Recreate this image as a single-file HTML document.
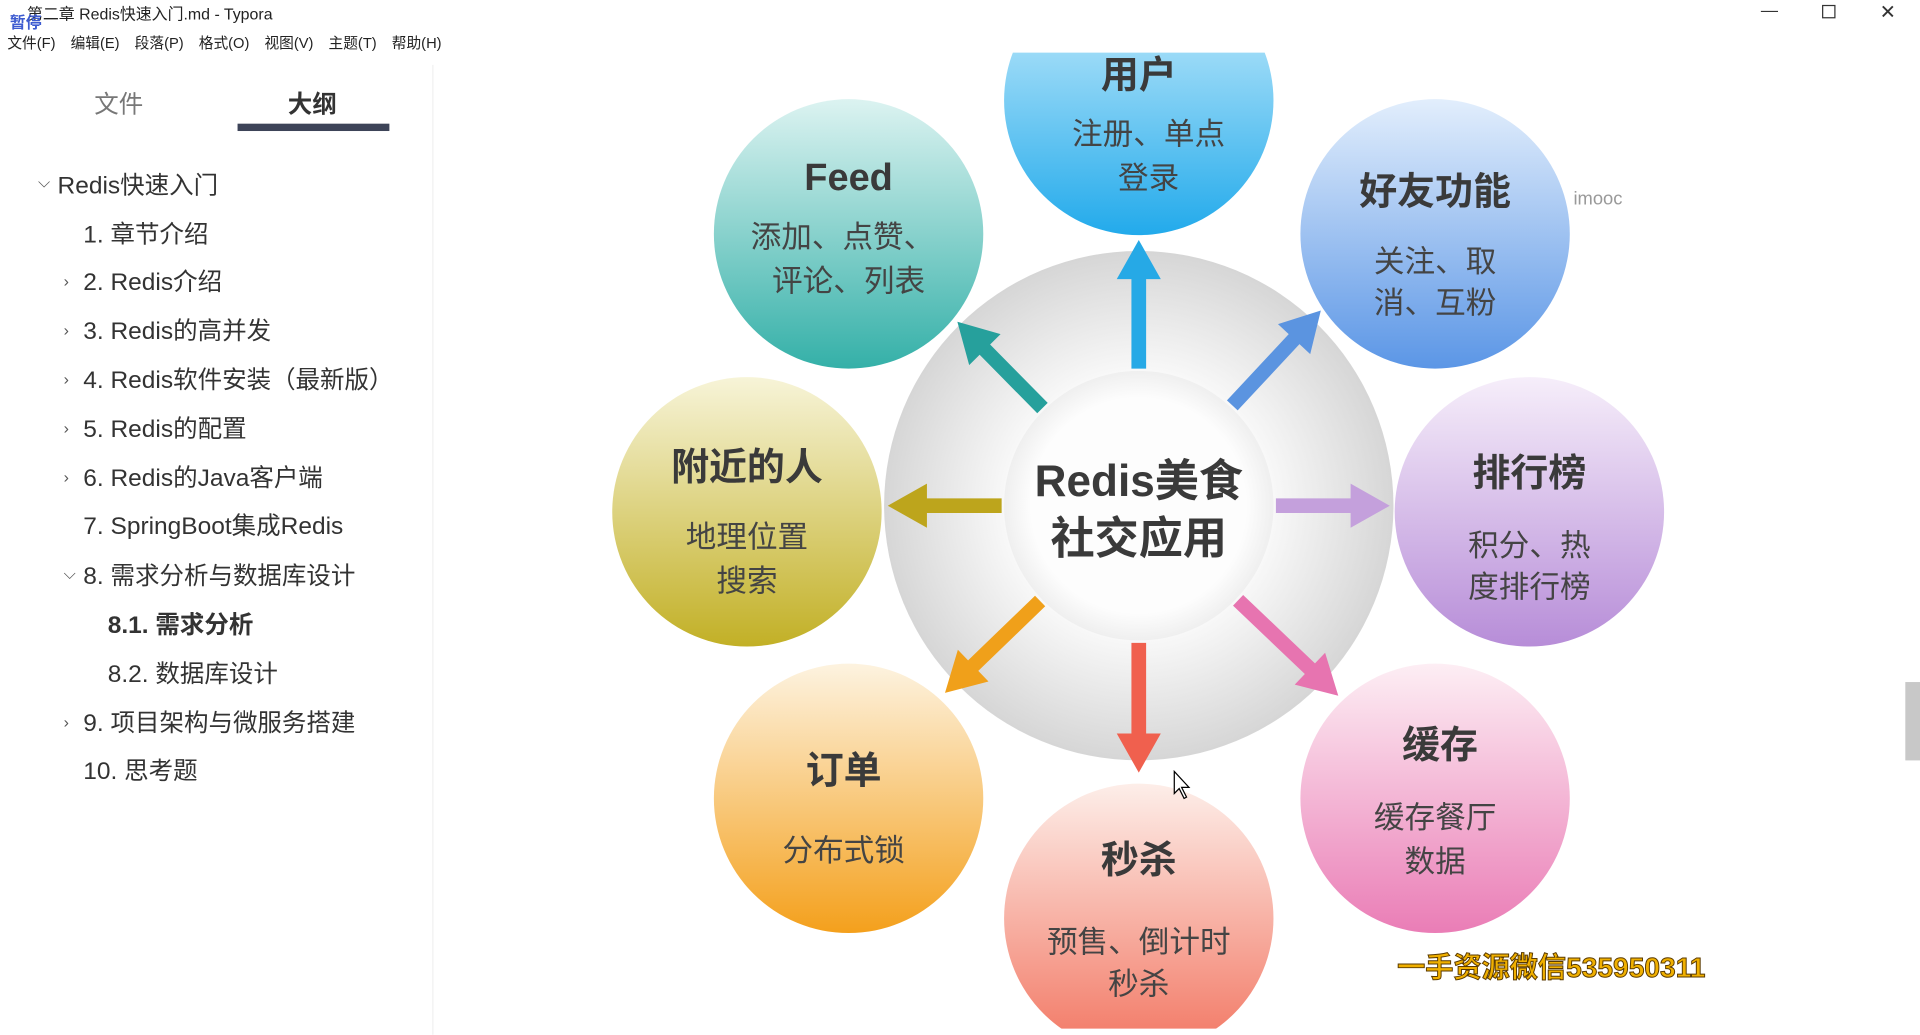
<!DOCTYPE html>
<html><head><meta charset="utf-8"><style>
html,body{margin:0;padding:0;background:#fff;width:1920px;height:1035px;overflow:hidden}
#w{position:absolute;left:0;top:0;width:1568px;height:845px;transform:scale(1.22449);transform-origin:0 0;font-family:"Liberation Sans","Noto Sans CJK SC",sans-serif;color:#333}
.a{position:absolute;white-space:nowrap}
.o{position:absolute;font-size:20px;color:#333;line-height:24px;white-space:nowrap}
.c{position:absolute;font-size:13px;color:#555}
</style></head><body><div id="w">
<div class="a" style="left:22px;top:1px;font-size:13px;color:#222">第二章 Redis快速入门.md - Typora</div>
<div class="a" style="left:8px;top:8px;font-size:13px;font-weight:bold;color:#3d5bd0">暂停</div>
<div class="a" style="left:6px;top:26px;font-size:12px;color:#222;word-spacing:9px">文件(F) 编辑(E) 段落(P) 格式(O) 视图(V) 主题(T) 帮助(H)</div>
<div class="a" style="left:1438px;top:0;font-size:14px;color:#333">—</div>
<div class="a" style="left:1488px;top:1px;width:9px;height:9px;border:1px solid #333;top:4px"></div>
<div class="a" style="left:1535px;top:0;font-size:16px;color:#333">✕</div>
<div style="position:absolute;left:353px;top:53px;width:1px;height:792px;background:#f0f0f0"></div>
<div class="a" style="left:77px;top:69px;font-size:20px;color:#777">文件</div>
<div class="a" style="left:235px;top:69px;font-size:20px;font-weight:bold;color:#333">大纲</div>
<div style="position:absolute;left:194px;top:101px;width:124px;height:6px;background:#3d4458"></div>
<div class="c" style="left:31px;top:141px">⌵</div>
<div class="o" style="left:47px;top:140px">Redis快速入门</div>
<div class="o" style="left:68px;top:180px">1. 章节介绍</div>
<div class="c" style="left:52px;top:222px">›</div><div class="o" style="left:68px;top:219px">2. Redis介绍</div>
<div class="c" style="left:52px;top:262px">›</div><div class="o" style="left:68px;top:259px">3. Redis的高并发</div>
<div class="c" style="left:52px;top:302px">›</div><div class="o" style="left:68px;top:299px">4. Redis软件安装（最新版）</div>
<div class="c" style="left:52px;top:342px">›</div><div class="o" style="left:68px;top:339px">5. Redis的配置</div>
<div class="c" style="left:52px;top:382px">›</div><div class="o" style="left:68px;top:379px">6. Redis的Java客户端</div>
<div class="o" style="left:68px;top:418px">7. SpringBoot集成Redis</div>
<div class="c" style="left:52px;top:461px">⌵</div><div class="o" style="left:68px;top:459px">8. 需求分析与数据库设计</div>
<div class="o" style="left:88px;top:499px;font-weight:bold">8.1. 需求分析</div>
<div class="o" style="left:88px;top:539px">8.2. 数据库设计</div>
<div class="c" style="left:52px;top:582px">›</div><div class="o" style="left:68px;top:579px">9. 项目架构与微服务搭建</div>
<div class="o" style="left:68px;top:618px">10. 思考题</div>
<div style="position:absolute;left:1556px;top:557px;width:12px;height:64px;background:#c8c8c8"></div>
<svg style="position:absolute;left:0;top:0" width="1568" height="845" font-family="Liberation Sans,Noto Sans CJK SC,sans-serif">
<defs>
<radialGradient id="gc" cx="0.5" cy="0.5" r="0.5"><stop offset="0.5" stop-color="#fafafa"/><stop offset="1" stop-color="#d6d6d6"/></radialGradient>
<radialGradient id="gi" cx="0.5" cy="0.5" r="0.5"><stop offset="0.8" stop-color="#fdfdfd"/><stop offset="1" stop-color="#efefef"/></radialGradient>
<linearGradient id="b1" x1="0" y1="0" x2="0" y2="1"><stop offset="0" stop-color="#d4f1fd"/><stop offset="1" stop-color="#22aaeb"/></linearGradient>
<linearGradient id="b2" x1="0" y1="0" x2="0" y2="1"><stop offset="0" stop-color="#dcf3f1"/><stop offset="1" stop-color="#34b0a8"/></linearGradient>
<linearGradient id="b3" x1="0" y1="0" x2="0" y2="1"><stop offset="0" stop-color="#e2eefc"/><stop offset="1" stop-color="#5b96e6"/></linearGradient>
<linearGradient id="b4" x1="0" y1="0" x2="0" y2="1"><stop offset="0" stop-color="#f7f4d8"/><stop offset="1" stop-color="#c2b026"/></linearGradient>
<linearGradient id="b5" x1="0" y1="0" x2="0" y2="1"><stop offset="0" stop-color="#f6eefa"/><stop offset="1" stop-color="#b78dd8"/></linearGradient>
<linearGradient id="b6" x1="0" y1="0" x2="0" y2="1"><stop offset="0" stop-color="#fdf3e0"/><stop offset="1" stop-color="#f4a01c"/></linearGradient>
<linearGradient id="b7" x1="0" y1="0" x2="0" y2="1"><stop offset="0" stop-color="#fdeef4"/><stop offset="1" stop-color="#ea7db6"/></linearGradient>
<linearGradient id="b8" x1="0" y1="0" x2="0" y2="1"><stop offset="0" stop-color="#fdeee9"/><stop offset="1" stop-color="#f27662"/></linearGradient>
<clipPath id="cl"><rect x="400" y="43" width="1100" height="797"/></clipPath>
</defs>
<g clip-path="url(#cl)">
<circle cx="930" cy="413" r="208" fill="url(#gc)"/>
<circle cx="930" cy="413" r="110" fill="url(#gi)"/>
<g transform="translate(930 413)">
<g transform="rotate(-90)"><polygon points="112,-6 185,-6 185,-18 217,0 185,18 185,6 112,6" fill="#26a9e6"/></g>
<g transform="rotate(-47)"><polygon points="112,-6 186,-6 186,-18 218,0 186,18 186,6 112,6" fill="#5b94e0"/></g>
<g transform="rotate(0)"><polygon points="112,-6 173,-6 173,-18 205,0 173,18 173,6 112,6" fill="#c4a0dc"/></g>
<g transform="rotate(43.6)"><polygon points="112,-6 193,-6 193,-18 225,0 193,18 193,6 112,6" fill="#e774b0"/></g>
<g transform="rotate(90)"><polygon points="112,-6 186,-6 186,-18 218,0 186,18 186,6 112,6" fill="#f0604e"/></g>
<g transform="rotate(136)"><polygon points="112,-6 188,-6 188,-18 220,0 188,18 188,6 112,6" fill="#f0a01a"/></g>
<g transform="rotate(180)"><polygon points="112,-6 173,-6 173,-18 205,0 173,18 173,6 112,6" fill="#bda51c"/></g>
<g transform="rotate(-134.6)"><polygon points="112,-6 179,-6 179,-18 211,0 179,18 179,6 112,6" fill="#26a09c"/></g>
</g>
<circle cx="930" cy="82" r="110" fill="url(#b1)"/>
<circle cx="693" cy="191" r="110" fill="url(#b2)"/>
<circle cx="1172" cy="191" r="110" fill="url(#b3)"/>
<circle cx="610" cy="418" r="110" fill="url(#b4)"/>
<circle cx="1249" cy="418" r="110" fill="url(#b5)"/>
<circle cx="693" cy="652" r="110" fill="url(#b6)"/>
<circle cx="1172" cy="652" r="110" fill="url(#b7)"/>
<circle cx="930" cy="750" r="110" fill="url(#b8)"/>
<g text-anchor="middle" fill="#3a3a3a">
<text x="930" y="405" font-size="36" font-weight="bold">Redis美食</text>
<text x="930" y="452" font-size="36" font-weight="bold">社交应用</text>
<g font-size="31" font-weight="bold">
<text x="930" y="72">用户</text><text x="693" y="155">Feed</text><text x="1172" y="167">好友功能</text>
<text x="610" y="392">附近的人</text><text x="1249" y="397">排行榜</text><text x="689" y="640">订单</text>
<text x="1176" y="619">缓存</text><text x="930" y="713">秒杀</text></g>
<g font-size="25" fill="#444">
<text x="938" y="118">注册、单点</text><text x="938" y="154">登录</text>
<text x="688" y="202">添加、点赞、</text><text x="693" y="238">评论、列表</text>
<text x="1172" y="222">关注、取</text><text x="1172" y="256">消、互粉</text>
<text x="610" y="447">地理位置</text><text x="610" y="483">搜索</text>
<text x="1249" y="454">积分、热</text><text x="1249" y="488">度排行榜</text>
<text x="689" y="703">分布式锁</text>
<text x="1172" y="676">缓存餐厅</text><text x="1172" y="712">数据</text>
<text x="930" y="778">预售、倒计时</text><text x="930" y="812">秒杀</text></g>
</g>
</g>
<text x="1285" y="167" font-size="15" fill="#999">imooc</text>
<text x="1141" y="798" font-size="23" font-weight="bold" fill="#f0b000" stroke="#5a3a00" stroke-width="0.8">一手资源微信535950311</text>
<path d="M959 630 L959 648 L963 644 L967 652 L969 651 L965 643 L971 643 Z" fill="#fff" stroke="#000" stroke-width="1"/>
</svg>
</div></body></html>
